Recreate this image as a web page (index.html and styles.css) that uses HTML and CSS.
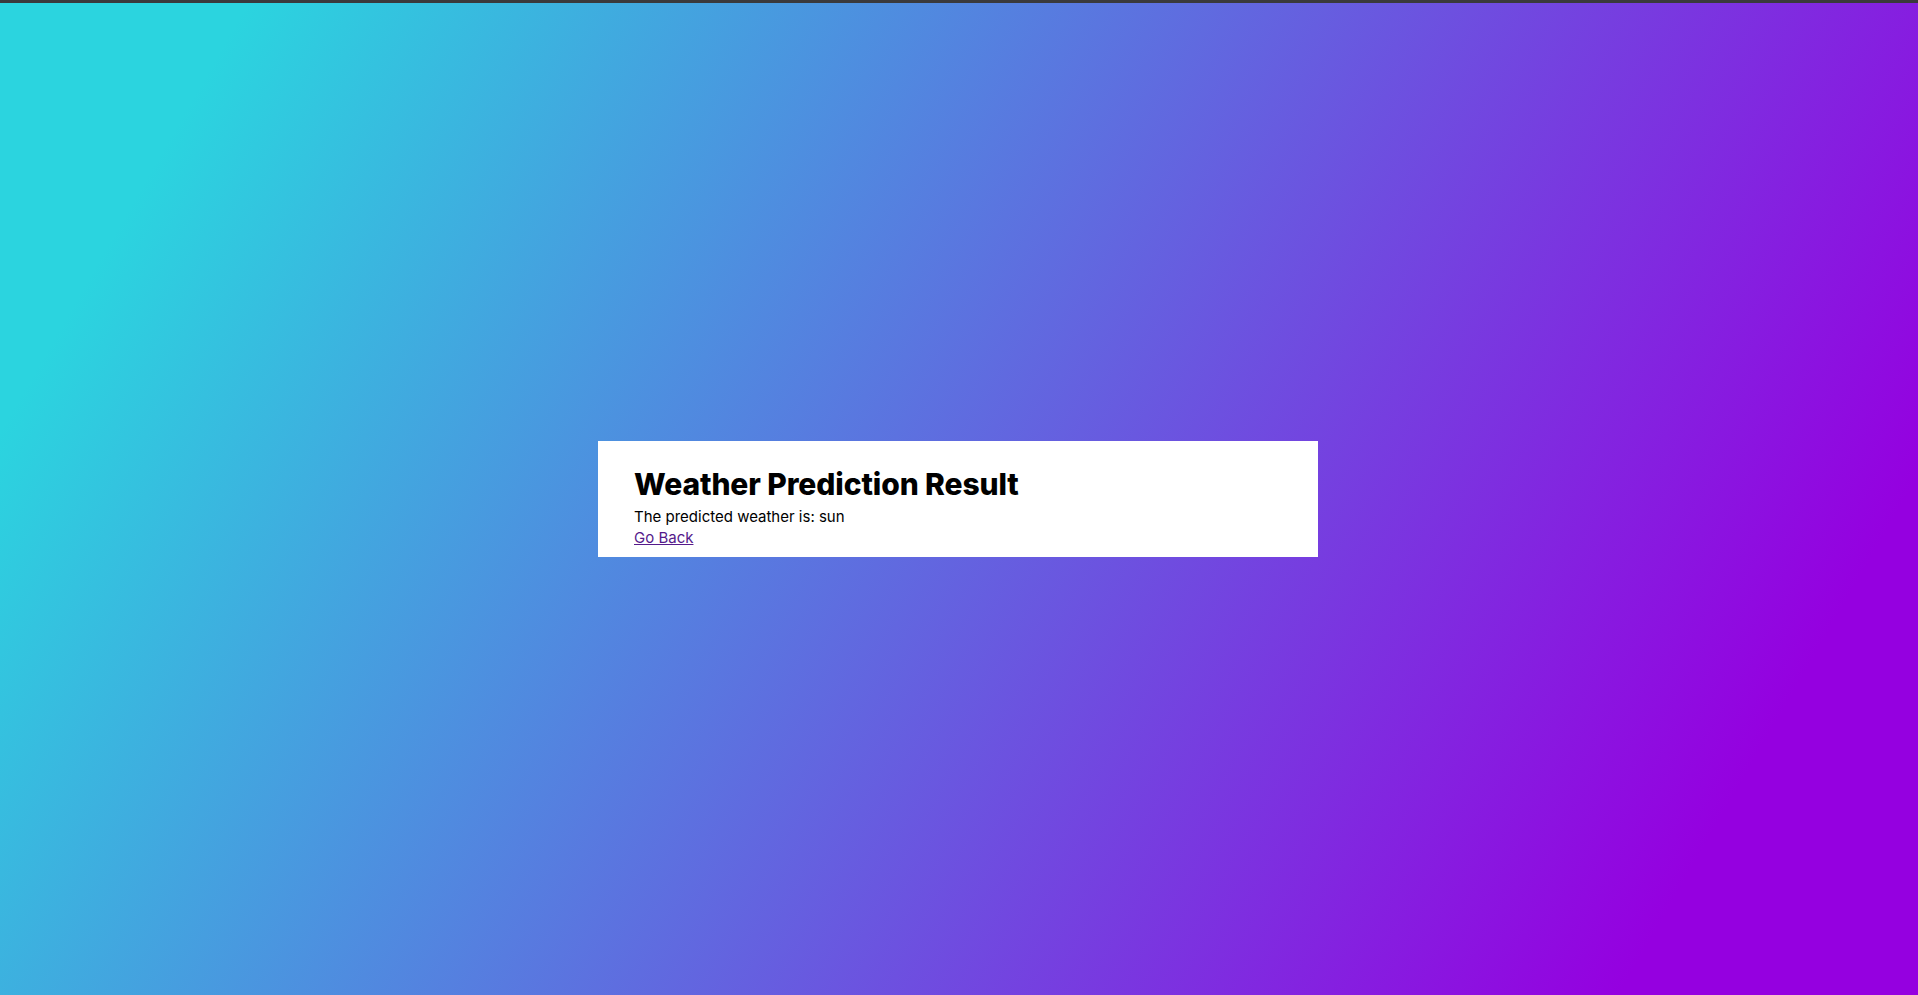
FILE: index.html
```html
<!DOCTYPE html>
<html lang="en">
<head>
<meta charset="utf-8">
<title>Weather Prediction Result</title>
<link rel="stylesheet" href="styles.css">
</head>
<body>
<div class="topbar"></div>
<main class="page">
  <section class="card">
    <h1 class="title">Weather Prediction Result</h1>
    <p class="result">The predicted weather is: sun</p>
    <a class="back" href="#">Go Back</a>
  </section>
</main>
</body>
</html>
```

FILE: styles.css
```css
* { box-sizing: border-box; }
html, body { margin: 0; padding: 0; height: 100%; }
body {
  font-family: "Inter", "Open Sans", sans-serif;
  background: linear-gradient(120deg, #2bd4df 10%, #9500e0 88%);
  color: #000;
  display: flex;
  flex-direction: column;
}
.topbar {
  flex: 0 0 3px;
  background: #3a3a3c;
}
.page {
  flex: 1;
  display: flex;
  align-items: center;
  justify-content: center;
  padding-right: 2px;
}
.card {
  width: 720px;
  background: #fff;
  padding: 25px 36px 9px;
}
.title {
  margin: 0 0 4px;
  font-size: 30px;
  line-height: 36px;
  font-weight: 800;
  letter-spacing: -0.1px;
}
.result {
  margin: 0;
  font-size: 15px;
  line-height: 21px;
}
.back {
  display: inline-block;
  font-size: 15px;
  line-height: 21px;
  color: #551a8b;
  text-decoration: underline;
}
```
